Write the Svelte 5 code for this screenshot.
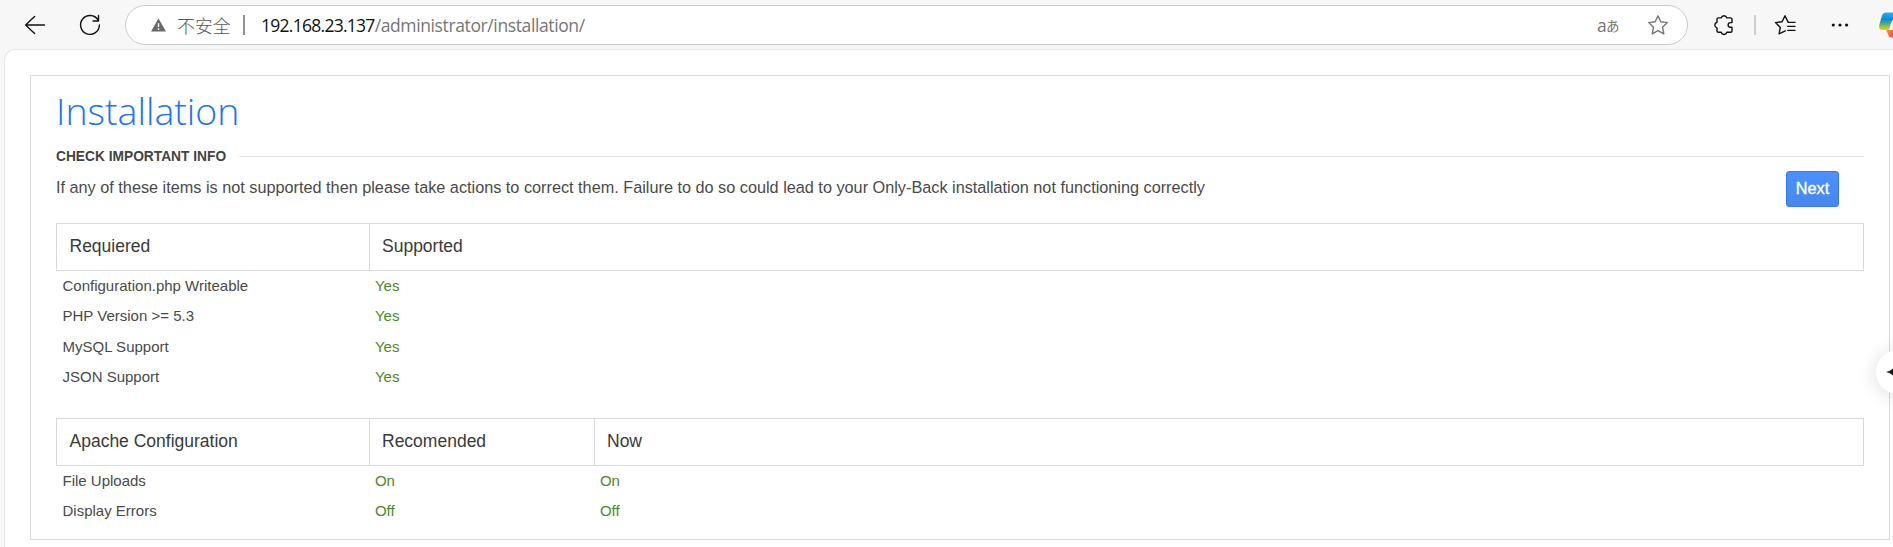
<script>
  const required = [
    ['Configuration.php Writeable', 'Yes'],
    ['PHP Version >= 5.3', 'Yes'],
    ['MySQL Support', 'Yes'],
    ['JSON Support', 'Yes']
  ];
  const apache = [
    ['File Uploads', 'On', 'On'],
    ['Display Errors', 'Off', 'Off']
  ];
</script>

<div class="browser">
  <header class="toolbar">
    <svg class="icon back" viewBox="0 0 24 24"><path d="M21.5 12H2.6M11.6 3.6 2.6 12l9 8.4" /></svg>
    <svg class="icon reload" viewBox="0 0 24 24"><path d="M20 7A9.4 9.4 0 1 0 21.4 12M20.5 2.5V8H15" /></svg>
    <div class="address">
      <svg class="warn" viewBox="0 0 16 14"><path d="M8 0 16 14H0Z" fill="#696969" /><path d="M8 5v4M8 10.4v1.6" stroke="#fff" stroke-width="1.5" /></svg>
      <span class="insecure">不安全</span>
      <i class="bar"></i>
      <span class="url"><b>192.168.23.137</b><span>/administrator/installation/</span></span>
      <span class="translate"><span class="latin">a</span><span class="kana">あ</span></span>
      <svg class="icon star" viewBox="0 0 24 24"><path d="m12 2.8 2.8 6 6.5.8-4.8 4.6 1.3 6.6-5.8-3.2-5.8 3.2 1.3-6.6L2.7 9.6l6.5-.8Z" /></svg>
    </div>
    <svg class="icon puzzle" viewBox="0 0 24 24"><path d="M6.4 4.9H9.2a2.9 2.9 0 0 1 5.6 0H18.6Q20 4.9 20 6.3V9.6H18.4a2.3 2.3 0 0 0 0 4.6H20V17.9Q20 19.3 18.6 19.3H14.8a2.9 2.9 0 0 1-5.6 0H6.4Q5 19.3 5 17.9V14.9a2.9 2.9 0 0 1 0-5.6V6.3Q5 4.9 6.4 4.9Z" /></svg>
    <i class="divider"></i>
    <svg class="icon favs" viewBox="0 0 24 24"><path d="M22 9.4H15.2L12 2.8 9.1 8.8 2.5 9.6l4.8 4.8-1.2 6.5 6.2-3.1M14.8 13.4H22M14.8 17.4H22" /></svg>
    <svg class="icon more" viewBox="0 0 24 24"><g fill="#111" stroke="none"><circle cx="5.3" cy="12" r="1.6" /><circle cx="12" cy="12" r="1.6" /><circle cx="18.6" cy="12" r="1.6" /></g></svg>
    <svg class="copilot" viewBox="0 0 14 26">
      <defs>
        <linearGradient id="sky" x1="0" y1="0" x2="0" y2="1"><stop offset="0" stop-color="#20b4ec" /><stop offset=".4" stop-color="#1686dc" /><stop offset=".7" stop-color="#63b76a" /><stop offset="1" stop-color="#f2ca19" /></linearGradient>
        <linearGradient id="fire" x1="0" y1="0" x2="1" y2="1"><stop offset="0" stop-color="#f79d3c" /><stop offset="1" stop-color="#e83e5b" /></linearGradient>
      </defs>
      <path d="M7 18h7v7.5h-1.5Q10 25.5 9 22Z" fill="url(#fire)" />
      <path d="M7 .5H14V8Q12.5 9 11.7 12L10 18H3Q-.8 18 .5 12L3 3.5Q4 .5 7 .5Z" fill="url(#sky)" />
    </svg>
  </header>

  <main class="page">
    <section class="card">
      <h1>Installation</h1>
      <div class="legend"><h2>CHECK IMPORTANT INFO</h2><hr /></div>
      <div class="intro">
        <p>If any of these items is not supported then please take actions to correct them. Failure to do so could lead to your Only-Back installation not functioning correctly</p>
        <button>Next</button>
      </div>

      <div class="head two"><span>Requiered</span><span>Supported</span></div>
      <div class="rows first">
        {#each required as [name, state]}
          <div class="row two"><span>{name}</span><span class="ok">{state}</span></div>
        {/each}
      </div>

      <div class="head three"><span>Apache Configuration</span><span>Recomended</span><span>Now</span></div>
      <div class="rows">
        {#each apache as [name, wanted, now]}
          <div class="row three"><span>{name}</span><span class="ok">{wanted}</span><span class="ok">{now}</span></div>
        {/each}
      </div>
    </section>
  </main>

  <div class="assistant"><svg viewBox="0 0 24 24"><path d="M0 12Q9 10 12 0 15 10 24 12 15 14 12 24 9 14 0 12Z" fill="#1b1b1b" /></svg></div>
</div>

<style>
  :global(body) { overflow: hidden; background: #f7f7f7; }
  .browser { position: relative; height: 547px; overflow: hidden; display: flex; flex-direction: column; font-family: "Liberation Sans", Arial, sans-serif; color: #4a4a4a; }
  .toolbar { height: 49px; flex: none; display: flex; align-items: center; box-sizing: border-box; padding-left: 23px; background: #f7f7f7; }
  .icon { width: 24px; height: 24px; flex: none; fill: none; stroke: #111; stroke-width: 1.4; stroke-linejoin: round; stroke-linecap: round; }
  .reload { margin-left: 31px; }
  .address { width: 1563px; height: 40px; flex: none; box-sizing: border-box; margin-left: 23px; display: flex; align-items: center; border: 1px solid #cacaca; border-radius: 20px; background: #fff; padding-left: 25px; }
  .warn { width: 15px; height: 14px; flex: none; }
  .insecure { margin-left: 11px; width: 55px; font: 300 17.9px/24px "Noto Sans CJK SC", sans-serif; color: #555; white-space: nowrap; }
  .bar { width: 2px; height: 20px; margin-left: 11px; background: #929292; }
  .url { flex: 1; margin-left: 16px; font: 400 17.5px/24px "Open Sans", sans-serif; color: #767676; white-space: nowrap; }
  .url b { font-weight: 400; color: #111; letter-spacing: -.73px; }
  .url span { letter-spacing: -.38px; }
  .translate { display: flex; align-items: center; width: 23px; color: #767676; line-height: 20px; }
  .latin { font-family: "Open Sans", sans-serif; font-size: 17.5px; width: 9px; }
  .kana { font-family: "Noto Sans CJK JP", sans-serif; font-size: 13.5px; }
  .star { stroke: #767676; margin: 0 17px 0 26px; }
  .puzzle { margin-left: 24px; }
  .divider { width: 2px; height: 20px; flex: none; margin-left: 18px; background: #cdcdcd; }
  .favs { margin-left: 17px; }
  .more { margin-left: 31px; }
  .copilot { width: 14px; height: 26px; margin-left: 27px; flex: none; }

  .page { flex: 1; margin-left: 4px; box-sizing: border-box; padding: 25px 3px 0 25px; background: #fff; border: 1px solid #e6e6e6; border-width: 1px 0 0 1px; border-radius: 11px 0 0 0; }
  .card { height: 465px; box-sizing: border-box; border: 1px solid #dadada; padding: 0 25px; display: flex; flex-direction: column; }
  h1 { margin: 10px 0 0; height: 50px; font: 300 37.5px/50px "Open Sans", sans-serif; color: #1a73f0; }
  .legend { display: flex; align-items: center; height: 20px; margin-top: 10px; }
  h2 { margin: 0; padding-top: 2px; font-size: 13.75px; line-height: 18px; color: #444; white-space: nowrap; }
  hr { flex: 1; height: 1px; border: 0; margin: 0 0 0 13px; background: #e5e5e5; }
  .intro { height: 57px; flex: none; display: flex; justify-content: space-between; align-items: flex-start; padding-right: 25px; }
  p { margin: 11px 0 0; font-size: 16.25px; line-height: 20px; white-space: nowrap; }
  button { width: 53px; height: 36px; margin-top: 5px; padding: 0 0 2px; border: 1px solid #3079ed; border-radius: 3px; background: linear-gradient(#4d90fe, #4787ed); color: #fff; font: 16.25px/20px "Liberation Sans", Arial, sans-serif; -webkit-text-stroke: .35px #fff; }
  .two { display: grid; grid-template-columns: 313px 1fr; }
  .three { display: grid; grid-template-columns: 313px 225px 1fr; }
  .head { height: 48px; flex: none; box-sizing: border-box; border: 1px solid #dadada; font-size: 17.5px; line-height: 44px; color: #3a3a3a; }
  .head span { padding-left: 12.5px; }
  .head span + span { padding-left: 12px; }
  .head span:not(:last-child) { box-sizing: border-box; border-right: 1px solid #dadada; }
  .rows { font-size: 15px; padding-left: 6.5px; }
  .row { height: 30.3px; line-height: 29px; }
  .row .ok { margin-left: -.6px; }
  .first { height: 147px; flex: none; }
  .ok { color: #468c2a; }
  .assistant { position: absolute; left: 1876px; top: 350px; width: 44px; height: 44px; border-radius: 50%; background: #fff; box-shadow: 0 2px 20px rgba(0, 0, 0, .14); display: flex; align-items: center; justify-content: center; }
  .assistant svg { width: 24px; height: 24px; }
</style>
